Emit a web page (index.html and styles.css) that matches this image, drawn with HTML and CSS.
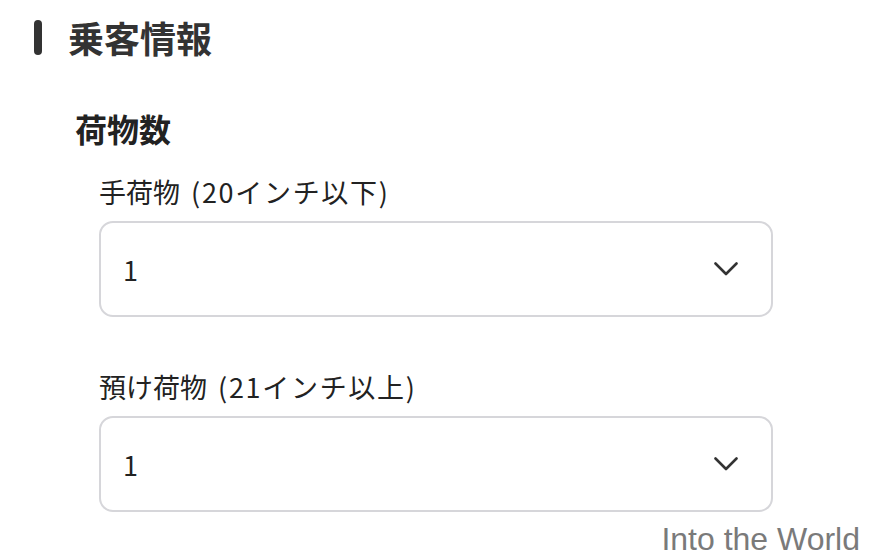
FILE: index.html
```html
<!DOCTYPE html>
<html lang="ja">
<head>
<meta charset="utf-8">
<link rel="stylesheet" href="styles.css">
</head>
<body>
<div class="page">
  <div class="heading">
    <span class="bar"></span>
    <h1 class="title">乗客情報</h1>
  </div>
  <div class="section">
    <h2 class="subtitle">荷物数</h2>
    <div class="field">
      <div class="label">手荷物 <span class="note">(20インチ以下)</span></div>
      <div class="select">
        <span class="value">1</span>
        <svg class="chev" width="24" height="15" viewBox="0 0 24 15"><path d="M1.5 1.5 L12 12 L22.5 1.5" fill="none" stroke="#333" stroke-width="2.6" stroke-linecap="round" stroke-linejoin="round"/></svg>
      </div>
    </div>
    <div class="field">
      <div class="label">預け荷物 <span class="note">(21インチ以上)</span></div>
      <div class="select">
        <span class="value">1</span>
        <svg class="chev" width="24" height="15" viewBox="0 0 24 15"><path d="M1.5 1.5 L12 12 L22.5 1.5" fill="none" stroke="#333" stroke-width="2.6" stroke-linecap="round" stroke-linejoin="round"/></svg>
      </div>
    </div>
  </div>
</div>
<div class="watermark">Into the World</div>
</body>
</html>
```
FILE: styles.css
```css
html, body {
  margin: 0;
  padding: 0;
  background: #ffffff;
}
body {
  width: 870px;
  height: 560px;
  overflow: hidden;
  position: relative;
  font-family: "Noto Sans CJK JP", "Noto Sans", sans-serif;
  color: #222;
}
.page {
  padding: 17px 0 0 34px;
}
.heading {
  display: flex;
  align-items: center;
  gap: 26px;
  height: 40px;
}
.bar {
  width: 8px;
  height: 35px;
  border-radius: 4px;
  background: #333;
}
.title {
  margin: 0;
  font-size: 36px;
  font-weight: 700;
  line-height: 40px;
  color: #333;
}
.section {
  padding-left: 41px;
}
.subtitle {
  margin: 53px 0 0 0;
  font-size: 32px;
  font-weight: 700;
  line-height: 36px;
  color: #222;
}
.field {
  margin-left: 24px;
}
.field + .field {
  margin-top: 52px;
}
.label {
  margin-top: 28px;
  font-size: 27px;
  line-height: 36px;
  word-spacing: 5px;
  color: #222;
}
.note {
  letter-spacing: 1.7px;
  word-spacing: 0;
}
.field + .field .label {
  margin-top: 0;
}
.select {
  box-sizing: border-box;
  width: 674px;
  height: 96px;
  margin-top: 11px;
  border: 2px solid #d6d6da;
  border-radius: 14px;
  display: flex;
  align-items: center;
  justify-content: space-between;
  padding: 0 33px 0 22px;
}
.value {
  font-size: 27px;
  color: #222;
}
.watermark {
  position: absolute;
  right: 10px;
  bottom: 2px;
  font-family: "Liberation Sans", Arial, sans-serif;
  font-size: 32px;
  color: #7a7a7a;
}
```
